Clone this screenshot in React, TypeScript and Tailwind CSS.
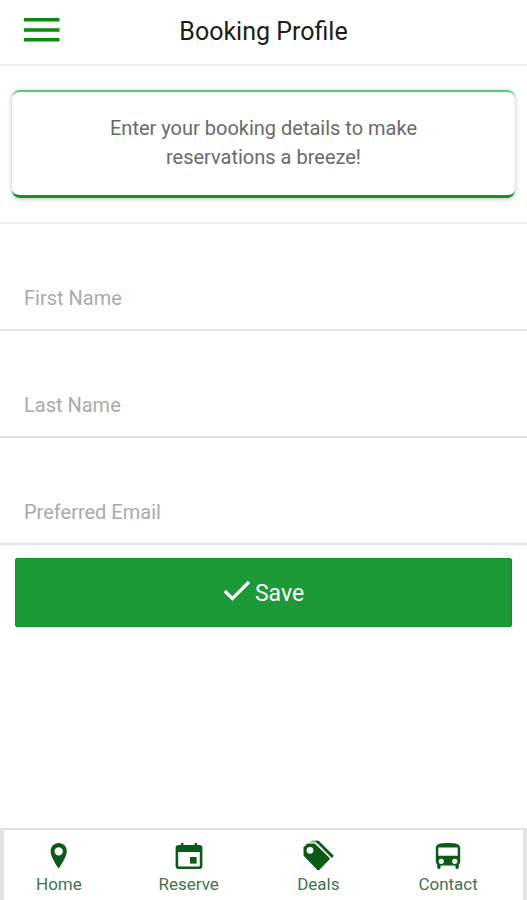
import { useState } from 'react';
import type { FormEvent, ReactNode } from 'react';

interface NavItem {
  href: string;
  label: string;
  icon: ReactNode;
}

const fields = [
  { id: 'firstName', label: 'First Name', type: 'text' },
  { id: 'lastName', label: 'Last Name', type: 'text' },
  { id: 'email', label: 'Preferred Email', type: 'email' },
];

function PinIcon() {
  return (
    <svg width="18" height="26" viewBox="0 0 18 26" fill="currentColor" aria-hidden="true">
      <path
        fillRule="evenodd"
        d="M8.700 0C4.100 0 .6 3.600.6 8.200c0 6.200 8.100 17.200 8.100 17.200s8.100-11 8.100-17.200C16.800 3.600 13.300 0 8.700 0zm0 4.200a4.200 4.200 0 1 1 0 8.400 4.200 4.200 0 0 1 0-8.400z"
      />
    </svg>
  );
}

function CalendarIcon() {
  return (
    <svg width="28" height="26" viewBox="0 0 28 26" fill="currentColor" aria-hidden="true">
      <path
        fillRule="evenodd"
        d="M6 0h2.400v2h11.200V0H22v2h2.400A3 3 0 0 1 27.400 5v18a3 3 0 0 1-3 3H3.600a3 3 0 0 1-3-3V5a3 3 0 0 1 3-3H6V0zM3.200 9v13.400c0 .6.4 1 1 1h19.600c.6 0 1-.4 1-1V9H3.200z"
      />
      <path d="M15 14h6.600v6.600H15z" />
    </svg>
  );
}

function TagsIcon() {
  return (
    <svg width="32" height="31" viewBox="0 0 32 31" fill="currentColor" aria-hidden="true">
      <path
        fillRule="evenodd"
        d="M1.500 7.200 5.500 3.400h6.300c.7 0 1.300.3 1.800.8l13.800 13.600c.5.5.5 1.300 0 1.800L17.200 30c-.5.5-1.300.5-1.800 0L2.300 16.400c-.5-.5-.8-1.100-.8-1.800V7.200zM8 6.900a3.400 3.400 0 1 0 0 6.800 3.400 3.400 0 0 0 0-6.800z"
      />
      <path
        d="M7.500 2.400 10 .4h3.600L17 2.600l-1.500 1.200-1.300-.9c-.5-.3-1-.5-1.600-.5H7.500z"
        opacity="0.5"
      />
      <path d="M13.600.4h1.800c.7 0 1.300.3 1.800.8l13.900 13.900c.5.5.5 1.200 0 1.700l-1.300 1.200L14.600 2.600z" />
    </svg>
  );
}

function BusIcon() {
  return (
    <svg width="26" height="26" viewBox="0 0 26 26" fill="currentColor" aria-hidden="true">
      <path
        fillRule="evenodd"
        d="M.8 5C.8 1 5 0 13 0s12.200 1 12.200 5v13.600c0 1.200-.5 2.200-1.400 2.900v3.100c0 .8-.6 1.400-1.400 1.400h-.6c-.8 0-1.400-.6-1.400-1.400v-2.200H5.600v2.200c0 .8-.6 1.400-1.400 1.400h-.6c-.8 0-1.400-.6-1.400-1.400v-3.100A3.700 3.700 0 0 1 .8 18.600V5zm2.500-.4v8.200h19.400V4.600H3.300zm2.900 11.100a2.600 2.600 0 1 0 0 5.200 2.600 2.600 0 0 0 0-5.200zm13.600 0a2.600 2.600 0 1 0 0 5.200 2.600 2.600 0 0 0 0-5.200z"
      />
    </svg>
  );
}

const navItems: NavItem[] = [
  { href: '#home', label: 'Home', icon: <PinIcon /> },
  { href: '#reserve', label: 'Reserve', icon: <CalendarIcon /> },
  { href: '#deals', label: 'Deals', icon: <TagsIcon /> },
  { href: '#contact', label: 'Contact', icon: <BusIcon /> },
];

export default function App() {
  const [values, setValues] = useState<Record<string, string>>({});

  const handleSubmit = (e: FormEvent) => {
    e.preventDefault();
  };

  return (
    <div className="flex min-h-screen flex-col bg-[#fefefe] font-[Roboto,sans-serif]">
      <header className="grid h-[66px] grid-cols-[36px_1fr_36px] items-center border-b-2 border-[#f1f1f1] px-6">
        <button type="button" aria-label="Open menu" className="pb-1 text-[#0a8a0f]">
          <svg width="36" height="24" viewBox="0 0 36 24" fill="currentColor" aria-hidden="true">
            <path d="M0 0h35.500v3.600H0zM0 10.200h35.500v3.600H0zM0 20h35.500v3.600H0z" />
          </svg>
        </button>
        <h1 className="text-center text-[25px] text-[#1c1c1c]">Booking Profile</h1>
      </header>

      <main className="flex-1">
        <section className="border-b-2 border-[#f1f1f1] px-3 py-6">
          <p className="rounded-lg border-t-2 border-b-3 border-t-[#5fc878] border-b-[#1b8f25] px-20 pt-[22px] pb-[23px] text-center text-xl leading-[29px] text-[#6a6a6a] shadow-[0_1px_4px_rgba(0,0,0,0.25)]">
            Enter your booking details to make reservations a breeze!
          </p>
        </section>

        <form onSubmit={handleSubmit}>
          {fields.map((field) => (
            <div key={field.id} className="border-b-2 border-[#e4e4e4] px-6 pt-[54px] pb-[11px]">
              <input
                id={field.id}
                type={field.type}
                aria-label={field.label}
                placeholder={field.label}
                value={values[field.id] ?? ''}
                onChange={(e) => setValues({ ...values, [field.id]: e.target.value })}
                className="block h-10 w-full bg-transparent text-xl text-[#444] outline-none placeholder:text-[#aaa]"
              />
            </div>
          ))}
          <div className="px-[15px] pt-[13px]">
            <button
              type="submit"
              className="flex h-[69px] w-full items-center justify-center gap-1 rounded-xs border border-[#089426] bg-[#1b9a37] pt-1 text-[23px] text-white"
            >
              <svg
                width="28"
                height="22"
                viewBox="0 0 28 22"
                fill="none"
                className="mb-2"
                aria-hidden="true"
              >
                <path d="m1.800 11 7.600 7.600L26 2" stroke="currentColor" strokeWidth="3.200" />
              </svg>
              Save
            </button>
          </div>
        </form>
      </main>

      <nav className="flex h-[72px] border-x-4 border-t-2 border-[#e2e2e2] bg-white">
        {navItems.map((item) => (
          <a
            key={item.label}
            href={item.href}
            className="flex flex-1 flex-col items-center pt-[9px] pr-5 text-[#0c5a17]"
          >
            <span className="flex h-[33px] items-center">{item.icon}</span>
            <span className="text-[17px] leading-6 text-[#3f7350]">{item.label}</span>
          </a>
        ))}
      </nav>
    </div>
  );
}
